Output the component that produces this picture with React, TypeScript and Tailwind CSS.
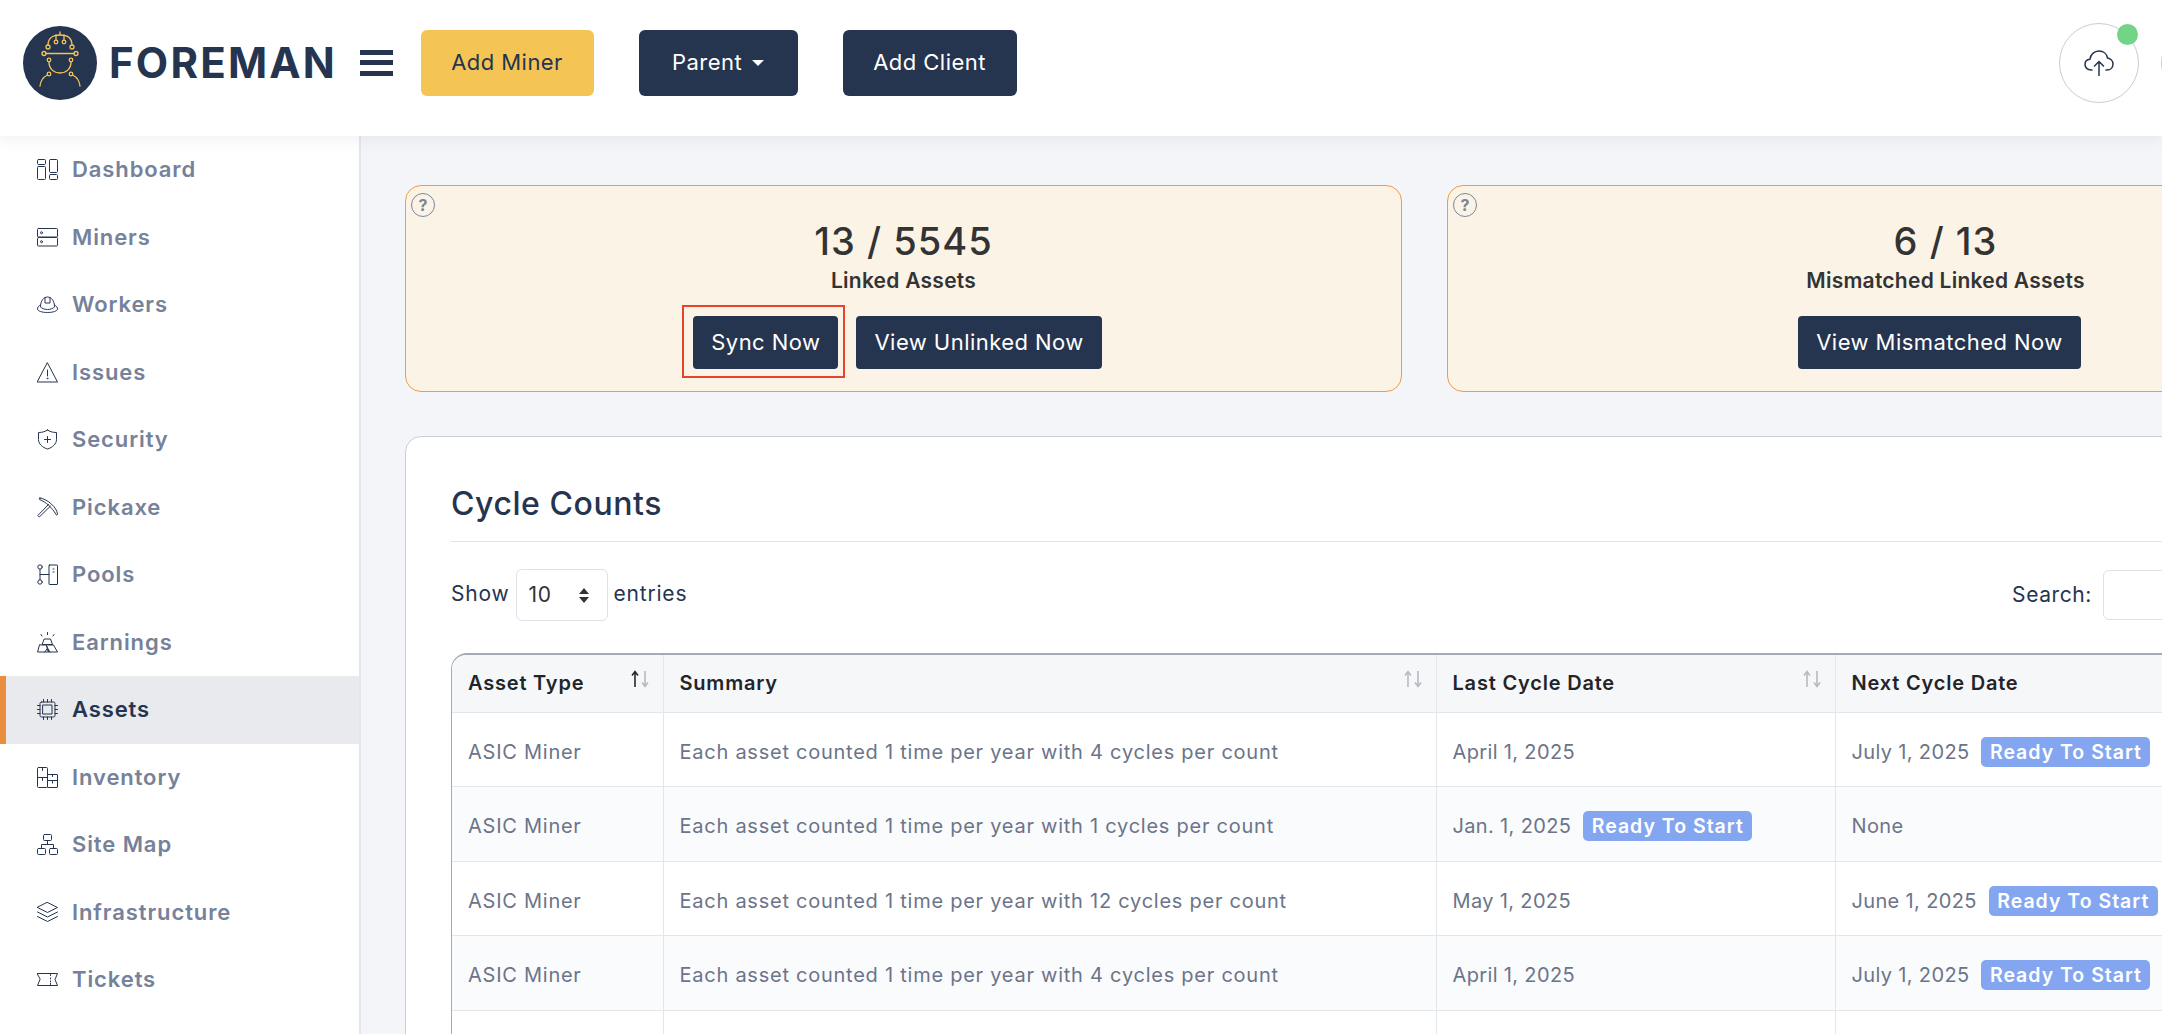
import type { ReactNode } from "react";

const font = { fontFamily: "Inter, 'Liberation Sans', sans-serif" };

function Glyph({ children }: { children: ReactNode }) {
  return (
    <svg
      viewBox="0 0 21 21"
      className="h-[21px] w-[21px] shrink-0"
      fill="none"
      stroke="#25344f"
      strokeWidth="1"
      strokeLinecap="round"
      strokeLinejoin="round"
    >
      {children}
    </svg>
  );
}

const navItems: { label: string; icon: ReactNode }[] = [
  {
    label: "Dashboard",
    icon: (
      <>
        <rect x="0.5" y="0.5" width="8" height="5" rx="1" />
        <rect x="0.5" y="7.5" width="8" height="13" rx="1" />
        <rect x="12.5" y="0.5" width="8" height="13" rx="1" />
        <rect x="12.5" y="15.5" width="8" height="5" rx="1" />
      </>
    ),
  },
  {
    label: "Miners",
    icon: (
      <>
        <rect x="0.5" y="1.5" width="20" height="8.5" rx="1" />
        <rect x="0.5" y="10.5" width="20" height="8.5" rx="1" />
        <circle cx="4.5" cy="5.7" r="1" />
        <circle cx="4.5" cy="14.7" r="1" />
      </>
    ),
  },
  {
    label: "Workers",
    icon: (
      <>
        <path d="M3.500 12.500C3.500 7 6.500 3 10.500 3s7 4 7 9.500" />
        <path d="M8 3.500v5.500h5V3.500" />
        <path d="M3.500 11C1.500 12 .5 13.500 .5 15c0 2 4.500 3.500 10 3.500s10-1.500 10-3.500c0-1.500-1-3-3-4" />
        <path d="M3.500 13c1.500 1.500 4 2.500 7 2.500s5.500-1 7-2.500" />
      </>
    ),
  },
  {
    label: "Issues",
    icon: (
      <>
        <path d="M10.500 1L20.500 20H.5Z" />
        <path d="M10.500 8v6" />
        <circle cx="10.500" cy="16.500" r=".4" />
      </>
    ),
  },
  {
    label: "Security",
    icon: (
      <>
        <path d="M10.500 1C8.500 2.500 5.500 3.500 1.500 3.500v7c0 4.500 4 8 9 9.500 5-1.500 9-5 9-9.500v-7c-4 0-7-1-9-2.500Z" />
        <path d="M10.500 7.500v6M7.500 10.500h6" />
      </>
    ),
  },
  {
    label: "Pickaxe",
    icon: (
      <>
        <path d="M3 1c-.8 0-1.300 1-.5 1.500C9 5 15 10.500 19 17.500c.5.800 1.500.500 1.500-.5C20 11 11 2 3 1Z" />
        <path d="M11.500 7.500L.8 18.500l1.500 1.500L13.500 9" />
      </>
    ),
  },
  {
    label: "Pools",
    icon: (
      <>
        <circle cx="3" cy="3" r="2.200" />
        <circle cx="3" cy="18" r="2.200" />
        <path d="M3 5.200v10.600M3 10.500h9" />
        <rect x="12" y="1" width="8.500" height="19.500" rx=".5" />
        <path d="M16 5h1M16 8h1" />
      </>
    ),
  },
  {
    label: "Earnings",
    icon: (
      <>
        <path d="M10.500 .5v2M4 2.500l1 1.500M17 2.500l-1 1.500" />
        <path d="M7.500 7h6l2 5.500h-10Z" />
        <path d="M4.500 13h5l2 7H.5l2-7Z" />
        <path d="M11.500 13h5l4 7h-9l-2-7" />
        <path d="M8 20l2.500-4 2.500 4" />
      </>
    ),
  },
  {
    label: "Assets",
    icon: (
      <>
        <rect x="3" y="3" width="15" height="15" rx="1.500" />
        <rect x="6" y="6" width="9" height="9" />
        <path d="M6.500 .5V3M10.500 .5V3M14.500 .5V3M6.500 18v2.500M10.500 18v2.500M14.500 18v2.500M.5 6.500H3M.5 10.500H3M.5 14.500H3M18 6.500h2.500M18 10.500h2.500M18 14.500h2.500" />
      </>
    ),
  },
  {
    label: "Inventory",
    icon: (
      <>
        <rect x="0.5" y="0.500" width="10" height="20" rx="1" />
        <rect x="10.500" y="7.500" width="10" height="13" rx=".5" />
        <path d="M.5 10.500h10M10.500 13.500h10" />
        <path d="M5.500 .5v3M5.500 10.500v3M15.500 7.500v2M15.500 13.500v2.500" />
      </>
    ),
  },
  {
    label: "Site Map",
    icon: (
      <>
        <rect x="6.500" y="0.500" width="8" height="6" rx="1" />
        <rect x="0.500" y="14.500" width="8" height="6" rx="1" />
        <rect x="12.500" y="14.500" width="8" height="6" rx="1" />
        <path d="M10.500 6.500v4M4.500 14.500v-4h12v4" />
      </>
    ),
  },
  {
    label: "Infrastructure",
    icon: (
      <>
        <path d="M10.500 .5l10 5-10 5-10-5Z" />
        <path d="M.5 10l10 5 10-5" />
        <path d="M.5 14.500l10 5 10-5" />
      </>
    ),
  },
  {
    label: "Tickets",
    icon: (
      <>
        <path d="M.5 4.500h20l-2.500 6 2.500 6H.5l2.500-6Z" />
        <path d="M13.500 5.500v1M13.500 9v1M13.500 12v1M13.500 14.500v1" />
      </>
    ),
  },
];

function Logo() {
  return (
    <svg viewBox="0 0 74 74" className="h-[74px] w-[74px] shrink-0">
      <circle cx="37" cy="37" r="37" fill="#25344f" />
      <g fill="none" stroke="#f4c455" strokeWidth="1.300" strokeLinecap="round">
        <path d="M25 19c0-6 4-10 12-10s12 4 12 10" />
        <path d="M33 9v5M41 9v5M37 6v3" />
        <path d="M23 27.500h28" />
        <circle cx="21" cy="27.500" r="2" />
        <circle cx="53" cy="27.500" r="2" />
        <circle cx="25" cy="21" r="2" />
        <circle cx="49" cy="21" r="2" />
        <circle cx="33" cy="16" r="1.800" />
        <circle cx="41" cy="16" r="1.800" />
        <circle cx="26" cy="34" r="1.800" />
        <circle cx="48" cy="34" r="1.800" />
        <path d="M26 36c0 7 5 11 11 11s11-4 11-11" />
        <circle cx="26" cy="48" r="1.800" />
        <circle cx="48" cy="48" r="1.800" />
        <path d="M24.500 49c-4 2-7 6-7.500 11M49.500 49c4 2 7 6 7.500 11" />
      </g>
    </svg>
  );
}

function Sidebar() {
  return (
    <aside className="w-[361px] shrink-0 border-r-2 border-[#e3e6ef] bg-white">
      {navItems.map((item) => {
        const active = item.label === "Assets";
        return (
          <a
            key={item.label}
            className={
              active
                ? "flex h-[67.5px] items-center gap-[14px] border-l-[6px] border-[#e98e3f] bg-[#e9eaee] pl-[31px] text-[22px] font-semibold tracking-[0.9px] text-[#25344f]"
                : "flex h-[67.5px] items-center gap-[14px] pl-[37px] text-[22px] font-semibold tracking-[0.9px] text-[#76819a]"
            }
          >
            <Glyph>{item.icon}</Glyph>
            {item.label}
          </a>
        );
      })}
    </aside>
  );
}

function Header() {
  return (
    <header className="relative z-10 flex h-[136px] shrink-0 items-center overflow-hidden bg-white pb-[11px] pl-[23px] tracking-[0.45px] shadow-[0_4px_14px_rgba(37,52,79,0.07)]">
      <Logo />
      <span className="ml-[12px] text-[42px] leading-none font-bold tracking-[2.2px] text-[#25344f]">
        FOREMAN
      </span>
      <button className="ml-[22.5px] flex w-[33px] flex-col gap-[5.5px]">
        <span className="h-[5px] bg-[#25344f]" />
        <span className="h-[5px] bg-[#25344f]" />
        <span className="h-[5px] bg-[#25344f]" />
      </button>
      <button className="ml-[28px] h-[66px] w-[173px] rounded-md bg-[#f4c455] text-[22px] text-[#25344f]">
        Add Miner
      </button>
      <button className="ml-[45px] flex h-[66px] w-[159px] items-center justify-center gap-[10px] rounded-md bg-[#25344f] text-[22px] text-white">
        Parent
        <span className="h-0 w-0 border-x-[6px] border-t-[6px] border-x-transparent border-t-white" />
      </button>
      <button className="ml-[45px] h-[66px] w-[174px] rounded-md bg-[#25344f] text-[22px] text-white">
        Add Client
      </button>
      <div className="mr-[-79px] ml-auto flex items-center gap-[22px]">
        <div className="relative flex h-[80px] w-[80px] items-center justify-center rounded-full border border-[#c9ccd6]">
          <svg
            viewBox="0 0 30 26"
            className="h-[26px] w-[30px]"
            fill="none"
            stroke="#25344f"
            strokeWidth="1.500"
            strokeLinecap="round"
            strokeLinejoin="round"
          >
            <path d="M8 20H7c-3.500 0-6-2.500-6-5.500s2-5 5-5.300C6.500 4.500 10 1 15 1c4.500 0 7.800 3 8.500 7 3 .5 5.500 3 5.500 6 0 3.500-2.500 6-6 6h-1" />
            <path d="M15 25.500V12M10.500 16l4.500-4.500 4.500 4.500" />
          </svg>
          <span className="absolute top-0 right-0 h-[21px] w-[21px] rounded-full bg-[#72d585]" />
        </div>
        <div className="h-[80px] w-[80px] rounded-full border border-[#c9ccd6]" />
      </div>
    </header>
  );
}

function Help() {
  return (
    <span className="absolute top-[7px] left-[5px] flex h-[24px] w-[24px] items-center justify-center rounded-full border border-[#7a8599] text-[16px] leading-none font-bold text-[#7a8599]">
      ?
    </span>
  );
}

function NavyButton({ children }: { children: ReactNode }) {
  return (
    <button className="h-[53px] rounded bg-[#25344f] px-[18px] text-[22px] tracking-[0.45px] text-white">
      {children}
    </button>
  );
}

function StatCard({
  value,
  label,
  children,
}: {
  value: string;
  label: string;
  children: ReactNode;
}) {
  return (
    <div className="relative flex h-[207px] w-[997px] shrink-0 flex-col items-center rounded-[16px] border border-[#eb9e45] bg-[#fcf3e7] pt-[32px] text-[#333333]">
      <Help />
      <div className="text-[38px] leading-[46px] font-medium tracking-[1px]">{value}</div>
      <div className="mt-[2px] text-[21px] leading-[30px] font-semibold tracking-[0.25px]">{label}</div>
      <div className="mt-[20px] flex gap-[18px] pr-[12px]">{children}</div>
    </div>
  );
}

const sortArrows = (active: boolean) => (
  <svg viewBox="0 0 20 18" className="absolute top-[15px] right-[13px] h-[18px] w-[20px]">
    <g fill="none" strokeWidth="1.600">
      <path d="M5 17V2M2 5.500L5 1.500l3 4" stroke={active ? "#25282c" : "#b6bac1"} />
      <path d="M15 1v15M12 12.500l3 4 3-4" stroke="#b6bac1" />
    </g>
  </svg>
);

function Badge() {
  return (
    <span className="ml-[12px] inline-block h-[30px] w-[169px] rounded-[5px] bg-[#84a6f0] text-center text-[19.500px] leading-[30px] font-semibold tracking-[1px] text-white">
      Ready To Start
    </span>
  );
}

const rows = [
  { summary: "Each asset counted 1 time per year with 4 cycles per count", last: "April 1, 2025", lastReady: false, next: "July 1, 2025", nextReady: true },
  { summary: "Each asset counted 1 time per year with 1 cycles per count", last: "Jan. 1, 2025", lastReady: true, next: "None", nextReady: false },
  { summary: "Each asset counted 1 time per year with 12 cycles per count", last: "May 1, 2025", lastReady: false, next: "June 1, 2025", nextReady: true },
  { summary: "Each asset counted 1 time per year with 4 cycles per count", last: "April 1, 2025", lastReady: false, next: "July 1, 2025", nextReady: true },
];

function CycleTable() {
  const th = "relative h-[57px] border-r border-b border-[#e3e6ea] pl-[16px] text-left font-semibold tracking-[0.8px] text-[#212529]";
  const td = "border-r border-b border-[#e3e6ea] pt-[5px] pl-[16px] tracking-[0.75px] text-[#6b7489]";
  const dateTd = "border-r border-b border-[#e3e6ea] pt-[5px] pl-[16px] tracking-[0.35px] text-[#6b7489]";
  return (
    <div className="mt-[32px] overflow-hidden rounded-tl-[16px] border-t-2 border-l border-[#a5abb5]">
      <table className="w-full table-fixed border-collapse text-[20px]">
        <colgroup>
          <col className="w-[211px]" />
          <col className="w-[773px]" />
          <col className="w-[399px]" />
          <col />
        </colgroup>
        <thead>
          <tr className="bg-[#f6f7f9]">
            <th className={th}>Asset Type{sortArrows(true)}</th>
            <th className={th}>Summary{sortArrows(false)}</th>
            <th className={th}>Last Cycle Date{sortArrows(false)}</th>
            <th className={th}>Next Cycle Date</th>
          </tr>
        </thead>
        <tbody>
          {rows.map((row, i) => (
            <tr key={i} className={i % 2 === 1 ? "h-[74.5px] bg-[#fafbfd]" : "h-[74.5px] bg-white"}>
              <td className={td}>ASIC Miner</td>
              <td className={td}>{row.summary}</td>
              <td className={dateTd}>
                {row.last}
                {row.lastReady && <Badge />}
              </td>
              <td className={dateTd}>
                {row.next}
                {row.nextReady && <Badge />}
              </td>
            </tr>
          ))}
          <tr className="h-[74.5px] bg-white">
            <td className={td} />
            <td className={td} />
            <td className={td} />
            <td className={td} />
          </tr>
        </tbody>
      </table>
    </div>
  );
}

function CycleCounts() {
  return (
    <section className="mt-[44px] w-[2040px] rounded-[16px] border border-[#c9cdd6] bg-white px-[45px] pt-[46px] pb-[40px]">
      <h2 className="border-b border-[#e2e4e8] pb-[16px] text-[32px] leading-[42px] font-medium tracking-[0.55px] text-[#25344f]">
        Cycle Counts
      </h2>
      <div className="mt-[27px] flex h-[52px] items-center justify-between text-[21px] tracking-[0.8px] text-[#25344f]">
        <div className="flex items-center">
          <span className="mb-[3px]">Show</span>
          <div className="mx-[6px] flex h-[52px] w-[92px] items-center justify-between rounded-md border border-[#dee2e8] pr-[17px] pl-[12px] text-[#333333]">
            10
            <svg viewBox="0 0 12 15" className="h-[15px] w-[12px]">
              <path d="M6 0l5 6H1ZM6 15L1 9h10Z" fill="#333333" />
            </svg>
          </div>
          <span className="mb-[3px]">entries</span>
        </div>
        <label className="flex items-center gap-[11px] tracking-[0.6px]">
          Search:
          <input className="h-[50px] w-[296px] rounded-md border border-[#dee2e8]" />
        </label>
      </div>
      <CycleTable />
    </section>
  );
}

export default function App() {
  return (
    <div className="flex h-screen w-screen flex-col overflow-hidden bg-[#f3f5f9]" style={font}>
      <Header />
      <div className="flex min-h-0 flex-1">
        <Sidebar />
        <main className="min-w-0 flex-1 overflow-hidden pt-[49px] pl-[44px]">
          <div className="flex gap-[45px]">
            <StatCard value="13 / 5545" label="Linked Assets">
              <div className="relative">
                <NavyButton>Sync Now</NavyButton>
                <span className="absolute top-[-11px] right-[-7px] bottom-[-9px] left-[-11px] border-2 border-[#e8432a]" />
              </div>
              <NavyButton>View Unlinked Now</NavyButton>
            </StatCard>
            <StatCard value="6 / 13" label="Mismatched Linked Assets">
              <NavyButton>View Mismatched Now</NavyButton>
            </StatCard>
          </div>
          <CycleCounts />
        </main>
      </div>
    </div>
  );
}
